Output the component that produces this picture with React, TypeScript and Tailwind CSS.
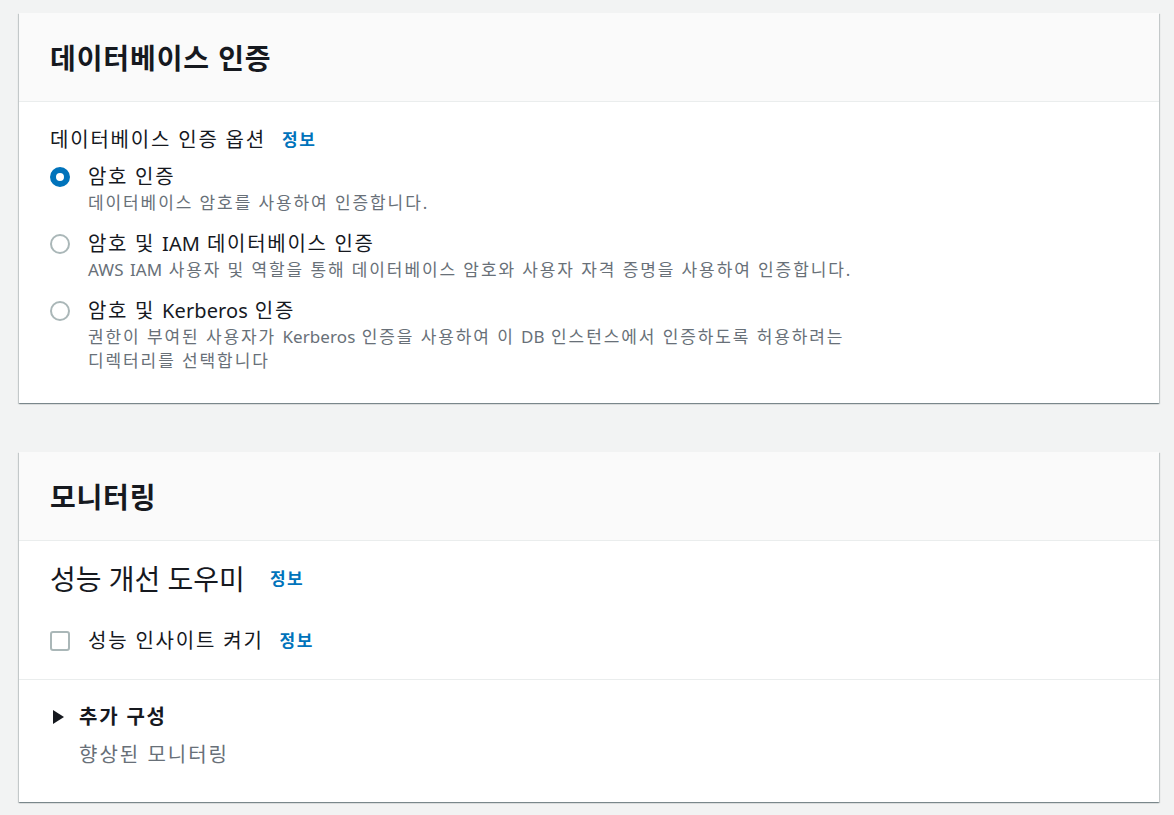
import React from "react";

const font = { fontFamily: '"Noto Sans", "Noto Sans CJK KR", sans-serif' };

function T({ text }: { text: string }) {
  const parts = text.split(/([A-Za-z]+)/);
  return (
    <>
      {parts.map((p, i) =>
        /^[A-Za-z]+$/.test(p) ? (
          <span key={i} className="tracking-[0.1px]">
            {p}
          </span>
        ) : (
          <React.Fragment key={i}>{p}</React.Fragment>
        )
      )}
    </>
  );
}

function Radio({ checked }: { checked?: boolean }) {
  return checked ? (
    <span className="mt-[3px] box-border inline-block h-[20px] w-[20px] shrink-0 rounded-full border-[6px] border-[#0073bb] bg-white" />
  ) : (
    <span className="mt-[3px] box-border inline-block h-[20px] w-[20px] shrink-0 rounded-full border-2 border-[#aab7b8] bg-white" />
  );
}

function Option({
  checked,
  label,
  desc,
}: {
  checked?: boolean;
  label: string;
  desc: React.ReactNode;
}) {
  return (
    <div className="flex items-start gap-[18px]">
      <Radio checked={checked} />
      <div className="flex flex-col">
        <div className="text-[20px] leading-[26px] tracking-[1.7px] text-[#16191f]">
          <T text={label} />
        </div>
        <div className="mt-[1px] text-[17px] leading-[24px] tracking-[1.9px] text-[#687078]">{desc}</div>
      </div>
    </div>
  );
}

function Info({ className = "" }: { className?: string }) {
  return (
    <span className={`text-[17px] font-bold tracking-[1.5px] text-[#0073bb] ${className}`}>정보</span>
  );
}

const cardShadow =
  "shadow-[0_1px_1px_0_rgba(0,28,36,0.3),1px_1px_1px_0_rgba(0,28,36,0.15),-1px_1px_1px_0_rgba(0,28,36,0.15)]";

export default function App() {
  return (
    <div style={font} className="min-h-[815px] bg-[#f2f3f3] pb-[13px] pl-[19px] pr-[15px] pt-[13px]">
      <div className={`bg-white ${cardShadow}`}>
        <div className="flex h-[89px] items-center border-b border-[#eaeded] bg-[#fafafa] px-[31px] pt-[2px]">
          <h2 className="text-[28px] font-bold leading-[34px] tracking-[0.9px] text-[#16191f]">데이터베이스 인증</h2>
        </div>
        <div className="px-[31px] pb-[30px] pt-[23px]">
          <div className="flex items-center text-[20px] leading-[30px] tracking-[1.8px] text-[#16191f]">
            데이터베이스 인증 옵션
            <Info className="ml-[16px]" />
          </div>
          <div className="mt-[9px] flex flex-col gap-[16px]">
            <Option checked label="암호 인증" desc="데이터베이스 암호를 사용하여 인증합니다." />
            <Option
              label="암호 및 IAM 데이터베이스 인증"
              desc={<T text="AWS IAM 사용자 및 역할을 통해 데이터베이스 암호와 사용자 자격 증명을 사용하여 인증합니다." />}
            />
            <Option
              label="암호 및 Kerberos 인증"
              desc={
                <>
                  <T text="권한이 부여된 사용자가 Kerberos 인증을 사용하여 이 DB 인스턴스에서 인증하도록 허용하려는" />
                  <br />
                  디렉터리를 선택합니다
                </>
              }
            />
          </div>
        </div>
      </div>

      <div className={`mt-[49px] bg-white ${cardShadow}`}>
        <div className="flex h-[89px] items-center border-b border-[#eaeded] bg-[#fafafa] px-[31px] pt-[2px]">
          <h2 className="text-[28px] font-bold leading-[34px] tracking-[0.8px] text-[#16191f]">모니터링</h2>
        </div>
        <div className="px-[31px] pb-[24px] pt-[20px]">
          <div className="flex items-center text-[28px] leading-[36px] text-[#16191f]">
            성능 개선 도우미
            <Info className="ml-[25px]" />
          </div>
          <div className="mt-[30px] flex h-[28px] items-center">
            <span className="box-border inline-block h-[20px] w-[20px] shrink-0 rounded-[3px] border-2 border-[#aab7b8] bg-white" />
            <span className="ml-[18px] text-[20px] leading-[28px] tracking-[1.8px] text-[#16191f]">성능 인사이트 켜기</span>
            <Info className="ml-[16px]" />
          </div>
        </div>
        <div className="border-t border-[#eaeded] px-[31px] pb-[33px] pt-[23px]">
          <div className="flex h-[28px] items-center">
            <svg width="12" height="14" viewBox="0 0 12 14" className="ml-[3px]">
              <path d="M0 0 L11 7 L0 14 Z" fill="#16191f" />
            </svg>
            <span className="ml-[14px] text-[20px] font-bold leading-[28px] tracking-[1.8px] text-[#16191f]">
              추가 구성
            </span>
          </div>
          <div className="ml-[29px] mt-[10px] text-[20px] leading-[28px] tracking-[2px] text-[#687078]">
            향상된 모니터링
          </div>
        </div>
      </div>
    </div>
  );
}
